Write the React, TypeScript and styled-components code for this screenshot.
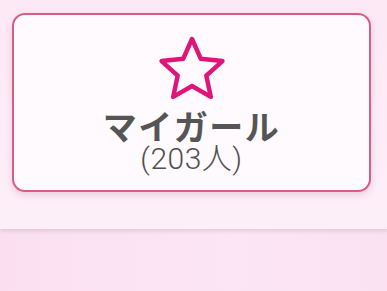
import * as React from "react";
import styled, { createGlobalStyle } from "styled-components";

const GlobalStyle = createGlobalStyle`
  html, body {
    margin: 0;
    padding: 0;
    background: #fbe1f2;
    font-family: "Noto Sans CJK JP", "Noto Sans", sans-serif;
  }
`;

const Page = styled.div`
  width: 387px;
  height: 291px;
  background: linear-gradient(90deg, #fbdff1 0%, #fce6f4 60%, #fbe1f2 100%);
`;

const TopPanel = styled.div`
  height: 229px;
  box-sizing: border-box;
  padding: 13px 16px 0 12px;
  background: linear-gradient(180deg, #fde8f5 0%, #fdeff8 100%);
  box-shadow: 0 2px 4px rgba(190, 140, 170, 0.35);
`;

const Card = styled.button`
  width: 100%;
  height: 179px;
  box-sizing: border-box;
  display: flex;
  flex-direction: column;
  align-items: center;
  padding: 20px 0 0;
  border: 2.5px solid #d95c83;
  border-radius: 13px;
  background: #fefafd;
  box-shadow: 0 3px 6px rgba(180, 110, 150, 0.25);
  font-family: inherit;
  cursor: pointer;
`;

const StarIcon = styled.svg`
  width: 70px;
  height: 68px;
  display: block;
`;

const Title = styled.div`
  margin-top: 6px;
  font-size: 34px;
  font-weight: 700;
  line-height: 34px;
  color: #555;
  letter-spacing: 1.5px;
`;

const Count = styled.div`
  margin-top: 1px;
  font-size: 30px;
  font-weight: 300;
  line-height: 30px;
  color: #505050;
  letter-spacing: 0.5px;
  font-family: "Roboto", "Noto Sans CJK JP", sans-serif;
`;

const starPoints = (cx: number, cy: number, r: number, inner: number) => {
  const pts: string[] = [];
  for (let i = 0; i < 10; i++) {
    const rad = i % 2 === 0 ? r : r * inner;
    const a = (Math.PI / 5) * i - Math.PI / 2;
    pts.push(`${(cx + rad * Math.cos(a)).toFixed(2)},${(cy + rad * Math.sin(a)).toFixed(2)}`);
  }
  return pts.join(" ");
};

export default function App() {
  return (
    <>
      <GlobalStyle />
      <Page>
        <TopPanel>
          <Card>
            <StarIcon viewBox="0 0 70 68">
              <polygon
                points={starPoints(35, 36, 32, 0.47)}
                fill="none"
                stroke="#e0157a"
                strokeWidth={4.5}
                strokeLinejoin="round"
              />
            </StarIcon>
            <Title>マイガール</Title>
            <Count>(203人)</Count>
          </Card>
        </TopPanel>
      </Page>
    </>
  );
}
